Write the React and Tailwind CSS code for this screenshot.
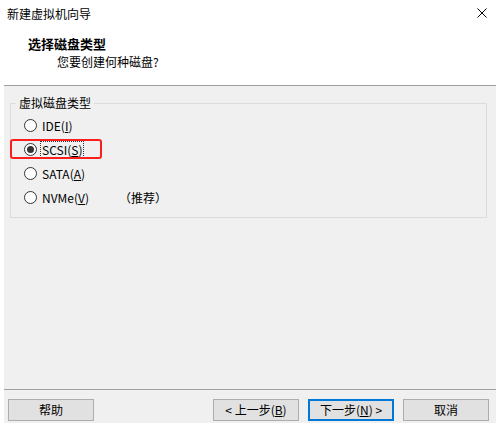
import React from "react";

const font = { fontFamily: '"Noto Sans CJK SC", "Noto Sans", sans-serif' };

function Radio({ checked, children, focus }) {
  return (
    <div className="h-[24px] flex items-center pl-[13px]">
      <span className="w-[13px] h-[13px] rounded-full border border-[#333333] bg-white flex items-center justify-center shrink-0">
        {checked && <span className="w-[7px] h-[7px] rounded-full bg-[#333333]" />}
      </span>
      <span
        className={
          "ml-[3px] px-[1px] leading-[15px] border " +
          (focus ? "border-dotted border-[#333333]" : "border-transparent")
        }
      >
        {children}
      </span>
    </div>
  );
}

function Btn({ children, primary }) {
  return (
    <div
      className={
        "w-[86px] h-[22px] flex items-center justify-center bg-[#e1e1e1] text-[12px] text-black " +
        (primary ? "border-2 border-[#0078d7]" : "border border-[#adadad]")
      }
    >
      {children}
    </div>
  );
}

export default function App() {
  return (
    <div
      className="relative w-[499px] h-[428px] bg-white flex flex-col pb-[5px] text-black overflow-hidden"
      style={font}
    >
      {/* title bar */}
      <div className="h-[27px] flex items-center justify-between pl-[7px] pr-[12px] text-[12px]">
        <span className="leading-[14px]">新建虚拟机向导</span>
        <svg width="10" height="10" viewBox="0 0 10 10" className="mt-[-1px]">
          <path d="M0.5 0.5 L9.5 9.5 M9.5 0.5 L0.5 9.5" stroke="#000" strokeWidth="1" fill="none" />
        </svg>
      </div>
      {/* header */}
      <div className="h-[58px] pl-[28px] pt-[9px]">
        <div className="text-[13px] font-bold leading-[16px]">选择磁盘类型</div>
        <div className="text-[12px] leading-[16px] mt-[2px] pl-[29px]">您要创建何种磁盘?</div>
      </div>
      {/* panel */}
      <div className="ml-[4px] w-[492px] flex-1 flex flex-col border-t border-[#a0a0a0] bg-[#f0f0f0] text-[12px]">
        <fieldset className="mt-[10px] ml-[6px] w-[477px] border border-[#dcdcdc] pb-[8px]">
          <legend className="ml-[5px] px-[3px] leading-[14px]">虚拟磁盘类型</legend>
          <div className="mt-[3px]">
            <Radio>
              IDE(<span className="underline">I</span>)
            </Radio>
            <Radio checked focus>
              SCSI(<span className="underline">S</span>)
            </Radio>
            <Radio>
              SATA(<span className="underline">A</span>)
            </Radio>
            <Radio>
              <span>
                NVMe(<span className="underline">V</span>)
              </span>
              <span className="ml-[30px]">（推荐）</span>
            </Radio>
          </div>
        </fieldset>
        <div className="flex-1" />
        <div className="h-px bg-[#a0a0a0]" />
        <div className="flex items-center pl-[4px] pr-[7px] pt-[9px] pb-[2px]">
          <Btn>帮助</Btn>
          <div className="flex-1" />
          <div className="flex gap-[9px]">
            <Btn>
              &lt; 上一步(<span className="underline">B</span>)
            </Btn>
            <Btn primary>
              下一步(<span className="underline">N</span>) &gt;
            </Btn>
            <Btn>取消</Btn>
          </div>
        </div>
      </div>
      {/* red highlight */}
      <div className="absolute left-[10px] top-[139px] w-[92px] h-[20px] border-2 border-[#fa1e1e] rounded-[3px]" />
    </div>
  );
}
